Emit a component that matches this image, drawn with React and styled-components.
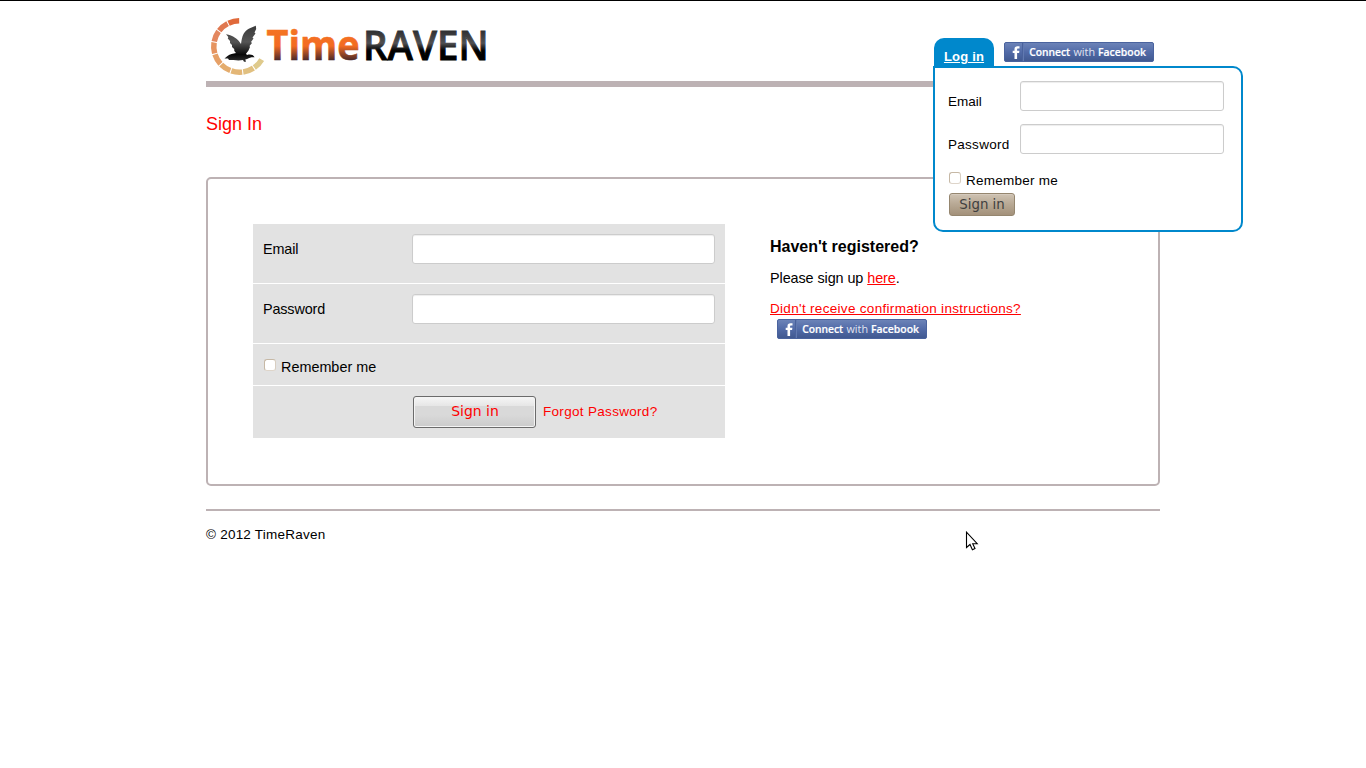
import React from "react";
import styled, { createGlobalStyle } from "styled-components";

const GlobalStyle = createGlobalStyle`
  * { box-sizing: border-box; }
  body {
    margin: 0;
    background: #fff;
    color: #000;
    font-family: "Liberation Sans", Arial, sans-serif;
    font-size: 13.5px;
  }
`;

const Page = styled.div`
  min-height: 768px;
  border-top: 1px solid #000;
  overflow: hidden;
`;

const Container = styled.div`
  width: 954px;
  margin: 0 auto;
`;

const Header = styled.header`
  position: relative;
  display: flex;
  justify-content: space-between;
  height: 86px;
  border-bottom: 6px solid #bdb2b4;
`;

const LogoImage = styled.svg`
  display: block;
  width: 310px;
  height: 80px;
`;

const HeaderNav = styled.nav`
  display: flex;
  align-items: flex-start;
  gap: 10px;
  padding: 37px 6px 0 0;
`;

const LoginTab = styled.a`
  width: 60px;
  height: 30px;
  padding-top: 10px;
  border-radius: 10px 10px 0 0;
  background: #0088cc;
  color: #fff;
  font-size: 13px;
  font-weight: bold;
  line-height: 18px;
  letter-spacing: 0.2px;
  text-align: center;
  text-decoration: underline;
`;

const FacebookLink = styled.a`
  display: block;
  width: 150px;
  height: 20px;
  margin: ${({ $margin }) => $margin || 0};

  svg { display: block; }
`;

const LoginPopup = styled.form`
  position: absolute;
  z-index: 2;
  top: 65px;
  left: 727px;
  width: 310px;
  height: 166px;
  padding: 13px 17px 0 13px;
  border: 2px solid #0088cc;
  border-radius: 0 10px 10px 10px;
  background: #fff;
`;

const PopupField = styled.label`
  display: flex;
  justify-content: space-between;
  height: 43px;

  span {
    padding-top: 13px;
    line-height: 16px;
    letter-spacing: ${({ $spacing }) => $spacing || 0};
  }
`;

const TextInput = styled.input`
  width: ${({ $width }) => $width}px;
  height: 30px;
  border: 1px solid #ccc;
  border-radius: 3px;
  background: #fff;
  box-shadow: inset 0 1px 1px rgba(0, 0, 0, 0.075);
  outline: 0;
`;

const CheckLabel = styled.label`
  display: flex;
  align-items: flex-start;
  gap: 5px;
  line-height: 16px;
`;

const Checkbox = styled.input`
  appearance: none;
  width: 12px;
  height: 12px;
  margin: 0 0 0 1px;
  border: 1px solid #c6b8a5;
  border-right-color: #d8cec1;
  border-bottom-color: #ded5ca;
  border-radius: 3px;
  background: #fff;
`;

const PopupRemember = styled(CheckLabel)`
  padding-top: 5px;
  height: 26px;
  letter-spacing: 0.24px;

  span { padding-top: 1px; }
`;

const PopupButton = styled.button`
  display: block;
  width: 66px;
  height: 23px;
  margin: 0 0 0 1px;
  padding: 0;
  border: 1px solid #95866f;
  border-radius: 3px;
  background: linear-gradient(#cfc3b3, #b9aa96 45%, #a3917a);
  box-shadow: inset 0 1px 0 #d5cabd;
  color: #3f3f3f;
  font: 13.33px/18px "DejaVu Sans", sans-serif;
`;

const Title = styled.h1`
  height: 90px;
  margin: 0;
  padding-top: 26px;
  color: #ff0000;
  font-size: 18px;
  font-weight: normal;
  line-height: 22px;
`;

const Panel = styled.main`
  display: flex;
  gap: 45px;
  height: 309px;
  padding: 45px;
  border: 2px solid #bdb2b4;
  border-radius: 5px;
`;

const SignInForm = styled.form`
  display: flex;
  flex-direction: column;
  gap: 1px;
  width: 472px;
  font-size: 14.4px;
`;

const FormRow = styled.div`
  display: flex;
  align-items: flex-start;
  height: ${({ $height }) => $height}px;
  padding: 10px;
  background: #e2e2e2;
`;

const FieldName = styled.label`
  width: 149px;
  padding-top: 6px;
  line-height: 18px;
  letter-spacing: -0.15px;
`;

const RememberLabel = styled(CheckLabel)`
  padding-top: 5px;

  span { padding-top: 0; }
`;

const SubmitButton = styled.button`
  width: 123px;
  height: 32px;
  margin: 0 7px 0 150px;
  padding: 0 0 2px 1px;
  border: 1px solid #6b6b6b;
  border-radius: 3px;
  background: linear-gradient(#f6f6f6, #e6e6e6 30%, #d9d9d9 31%, #d9d9d9 60%, #cbcbcb);
  box-shadow: inset 0 0 0 1px #f4f4f4;
  color: #ff0000;
  font: 14px/20px "DejaVu Sans", sans-serif;
`;

const RedLink = styled.a`
  color: #ff0000;
  text-decoration: ${({ $plain }) => ($plain ? "none" : "underline")};
`;

const ForgotLink = styled(RedLink)`
  padding-top: 8px;
  font-size: 13.5px;
  line-height: 16px;
  letter-spacing: 0.31px;
`;

const SignUp = styled.section`
  padding-top: 13px;
`;

const SignUpTitle = styled.h2`
  margin: 0;
  font-size: 16px;
  line-height: 20px;
`;

const SignUpText = styled.p`
  margin: 12px 0 0;
  font-size: 14.4px;
  line-height: 18px;
  letter-spacing: -0.08px;
`;

const Confirmation = styled.p`
  margin: 14px 0 0;
  line-height: 16px;
  letter-spacing: 0.31px;
`;

const Footer = styled.footer`
  margin-top: 23px;
  padding-top: 16px;
  border-top: 2px solid #bdb2b4;
  line-height: 16px;
  letter-spacing: 0.23px;
`;

const Cursor = styled.svg`
  position: absolute;
  top: 531px;
  left: 965px;
`;

const RING_COLORS = ["#dfca8c", "#e1c080", "#e3b676", "#e4ac6d", "#e6a067", "#e69460", "#e3875f", "#e07850", "#e0693a"];

function ringSegment(index) {
  const start = 30.5 + index * 26.8;
  const end = start + 24.4;
  const point = (degrees, radius) => {
    const angle = (degrees * Math.PI) / 180;
    return `${(33.5 + radius * Math.cos(angle)).toFixed(2)} ${(45.5 + radius * Math.sin(angle)).toFixed(2)}`;
  };
  return `M${point(start, 28.5)}A28.5 28.5 0 0 1 ${point(end, 28.5)}L${point(end, 23)}A23 23 0 0 0 ${point(start, 23)}Z`;
}

function Logo() {
  return (
    <LogoImage viewBox="0 0 310 80" role="img" aria-label="TimeRAVEN">
      <defs>
        <linearGradient id="orange" gradientUnits="userSpaceOnUse" x1="0" y1="28" x2="0" y2="59">
          <stop offset="0" stopColor="#f47424" />
          <stop offset="0.55" stopColor="#f36b21" />
          <stop offset="1" stopColor="#4d2a29" />
        </linearGradient>
        <linearGradient id="dark" gradientUnits="userSpaceOnUse" x1="0" y1="30" x2="0" y2="59">
          <stop offset="0" stopColor="#303032" />
          <stop offset="0.42" stopColor="#505052" />
          <stop offset="0.68" stopColor="#000" />
          <stop offset="1" stopColor="#000" />
        </linearGradient>
        <linearGradient id="bird" x1="0" y1="0" x2="0" y2="1">
          <stop offset="0" stopColor="#3a3a3a" />
          <stop offset="0.45" stopColor="#555" />
          <stop offset="0.8" stopColor="#080808" />
          <stop offset="1" stopColor="#333" />
        </linearGradient>
      </defs>
      {RING_COLORS.map((color, index) => (
        <path key={color} d={ringSegment(index)} fill={color} />
      ))}
      <path
        fill="url(#bird)"
        d="M49.8 24.7 C45 26.5 40 28.3 37.5 33 C36 36 35.5 39 35 43 C32 38 27 34.5 20 33.3 L22.3 36 L21.8 37.5 L24 40 L24 42 L26 44 L26 46 L28.2 48 L28.3 50 L30 52 C27 52.5 24 53 21.5 55 L18.5 57.5 L22 57.5 L23 59 L27.5 59 C31 59.6 34 59.6 37 59 L38 60.8 L40 60.8 L39.3 58.5 C42 58 43.5 56.7 45.5 56.3 L48.6 56.2 C47 53.5 44 53.2 41 54 L40 52.8 L42.5 49.5 L44 46 L43.5 45 L46 42 L45 41 L47.5 37.5 L46.5 36.5 L49.5 32.5 L48.5 31.5 L50.2 28 Z"
      />
      <g fontFamily='"Open Sans", "Noto Sans", sans-serif' fontSize="40.6">
        <text x="60.5" y="58.8" fontWeight="700" fill="url(#orange)" stroke="url(#orange)" strokeWidth="0.6" textLength="93" lengthAdjust="spacingAndGlyphs">Time</text>
        <text x="157" y="58.8" fontWeight="600" fill="url(#dark)" stroke="url(#dark)" strokeWidth="0.9" textLength="125.5" lengthAdjust="spacingAndGlyphs">RAVEN</text>
      </g>
    </LogoImage>
  );
}

function FacebookButton({ margin }) {
  return (
    <FacebookLink $margin={margin}>
      <svg width="150" height="20" viewBox="0 0 150 20">
        <defs>
          <linearGradient id="facebook" x1="0" y1="0" x2="0" y2="1">
            <stop offset="0" stopColor="#6d84b8" />
            <stop offset="0.5" stopColor="#526ba8" />
            <stop offset="1" stopColor="#40588f" />
          </linearGradient>
        </defs>
        <rect x="0.5" y="0.5" width="149" height="19" rx="1.5" fill="url(#facebook)" stroke="#4a639e" />
        <path d="M18.5 1v18" stroke="#4a629c" />
        <path d="M19.5 1v18" stroke="#6179b0" />
        <path d="M15.5 4.3v2.3h-1.4c-.8 0-1 .4-1 1v1.2h2.3l-.3 2.3h-2V17h-2.6v-5.9H8.7V8.8h1.8V7c0-1.8 1.1-2.8 3-2.8z" fill="#fff" />
        <g fill="#fff" fontFamily='"Open Sans", "Noto Sans", sans-serif' fontSize="11.3">
          <text x="25.2" y="14.2" fontWeight="600" stroke="#fff" strokeWidth="0.2" textLength="41" lengthAdjust="spacingAndGlyphs">Connect</text>
          <text x="69.5" y="14.2" fillOpacity="0.85" textLength="21.5" lengthAdjust="spacingAndGlyphs">with</text>
          <text x="94" y="14.2" fontWeight="600" stroke="#fff" strokeWidth="0.2" textLength="48" lengthAdjust="spacingAndGlyphs">Facebook</text>
        </g>
      </svg>
    </FacebookLink>
  );
}

export default function App() {
  return (
    <>
      <GlobalStyle />
      <Page>
        <Container>
          <Header>
            <Logo />
            <HeaderNav>
              <LoginTab>Log in</LoginTab>
              <FacebookButton margin="4px 0 0" />
            </HeaderNav>
            <LoginPopup>
              <PopupField>
                <span>Email</span>
                <TextInput $width={204} type="text" />
              </PopupField>
              <PopupField $spacing="0.28px">
                <span>Password</span>
                <TextInput $width={204} type="password" />
              </PopupField>
              <PopupRemember>
                <Checkbox type="checkbox" />
                <span>Remember me</span>
              </PopupRemember>
              <PopupButton type="button">Sign in</PopupButton>
            </LoginPopup>
          </Header>
          <Title>Sign In</Title>
          <Panel>
            <SignInForm>
              <FormRow $height={59}>
                <FieldName>Email</FieldName>
                <TextInput $width={303} type="text" />
              </FormRow>
              <FormRow $height={59}>
                <FieldName>Password</FieldName>
                <TextInput $width={303} type="password" />
              </FormRow>
              <FormRow $height={41}>
                <RememberLabel>
                  <Checkbox type="checkbox" />
                  <span>Remember me</span>
                </RememberLabel>
              </FormRow>
              <FormRow $height={52}>
                <SubmitButton type="button">Sign in</SubmitButton>
                <ForgotLink $plain>Forgot Password?</ForgotLink>
              </FormRow>
            </SignInForm>
            <SignUp>
              <SignUpTitle>Haven't registered?</SignUpTitle>
              <SignUpText>
                Please sign up <RedLink>here</RedLink>.
              </SignUpText>
              <Confirmation>
                <RedLink>Didn't receive confirmation instructions?</RedLink>
              </Confirmation>
              <FacebookButton margin="2px 0 0 7px" />
            </SignUp>
          </Panel>
          <Footer>© 2012 TimeRaven</Footer>
        </Container>
        <Cursor width="16" height="22" viewBox="0 0 16 22">
          <path d="M1.5 1.2v15.3l3.5-3 2.4 5.2 2.6-1.2-2.3-4.8h4.5z" fill="#fff" stroke="#000" strokeWidth="1.1" />
        </Cursor>
      </Page>
    </>
  );
}
